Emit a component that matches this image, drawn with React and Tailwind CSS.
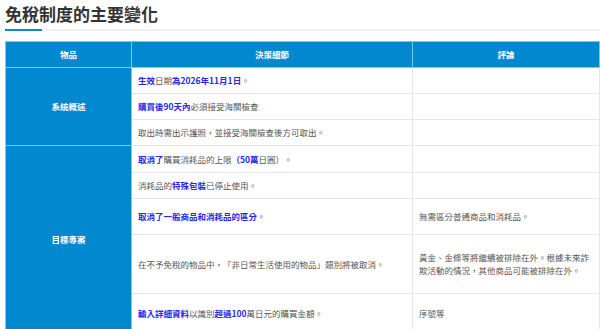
const B = ({ children }) => <span className="font-bold text-[#2828e8]">{children}</span>;

const rows = [
    { h: 'h-[26px]', detail: <><B>生效</B>日期<B>為2026年11月1日</B>。</>, note: '' },
    { h: 'h-[26px]', detail: <><B>購買後90天內</B>必須接受海關檢查</>, note: '' },
    { h: 'h-[26px]', detail: <>取出時需出示護照，並接受海關檢查後方可取出。</>, note: '' },
    { h: 'h-[27px]', detail: <><B>取消了</B>購買消耗品的上限<B>（50萬</B>日圓）。</>, note: '' },
    { h: 'h-[26px]', detail: <>消耗品的<B>特殊包裝</B>已停止使用。</>, note: '' },
    { h: 'h-[36px]', detail: <><B>取消了一般商品和消耗品的區分</B>。</>, note: '無需區分普通商品和消耗品。' },
    { h: 'h-[59px]', detail: <>在不予免稅的物品中，「非日常生活使用的物品」類別將被取消。</>, note: '黃金、金條等將繼續被排除在外。根據未來詐欺活動的情況，其他商品可能被排除在外。' },
    { h: 'h-[40px]', detail: <><B>輸入詳細資料</B>以識別<B>超過100</B>萬日元的購買金額。</>, note: '序號等' },
];

export default function App() {
    return (
        <div className="w-[600px] h-[329px] overflow-hidden bg-white pl-[5px] font-['Noto_Sans_CJK_TC','Noto_Sans',sans-serif]">
            {/* Title */}
            <h2 className="pt-[3px] text-[17px] leading-[22px] font-bold text-[#333]">免稅制度的主要變化</h2>
            <div className="mt-[4px] h-[2px] bg-[#f1f1f1]">
                <div className="w-[37px] h-[2px] bg-[#0a8bd0]" />
            </div>

            {/* Table */}
            <table className="mt-[10px] w-[594px] table-fixed border-collapse text-[8.5px] leading-[13px]">
                <colgroup>
                    <col className="w-[126px]" />
                    <col className="w-[281px]" />
                    <col className="w-[187px]" />
                </colgroup>
                <thead>
                    <tr className="h-[26px] bg-[#0288cf] text-white font-bold">
                        <th className="border border-[#7cc6ee] text-center">物品</th>
                        <th className="border border-[#7cc6ee] text-center">決策細節</th>
                        <th className="border border-[#7cc6ee] text-center">評論</th>
                    </tr>
                </thead>
                <tbody className="text-[#555]">
                    {rows.map((r, i) => (
                        <tr key={i} className={r.h}>
                            {i === 0 && (
                                <td rowSpan={3} className="border border-[#7cc6ee] bg-[#0288cf] text-center font-bold text-white">系統概述</td>
                            )}
                            {i === 3 && (
                                <td rowSpan={5} className="border border-[#7cc6ee] bg-[#0288cf] text-center font-bold text-white">目標專案</td>
                            )}
                            <td className="border border-[#e6e6e6] px-[6px] align-middle">{r.detail}</td>
                            <td className="border border-[#e6e6e6] px-[6px] align-middle">{r.note}</td>
                        </tr>
                    ))}
                </tbody>
            </table>
        </div>
    );
}
